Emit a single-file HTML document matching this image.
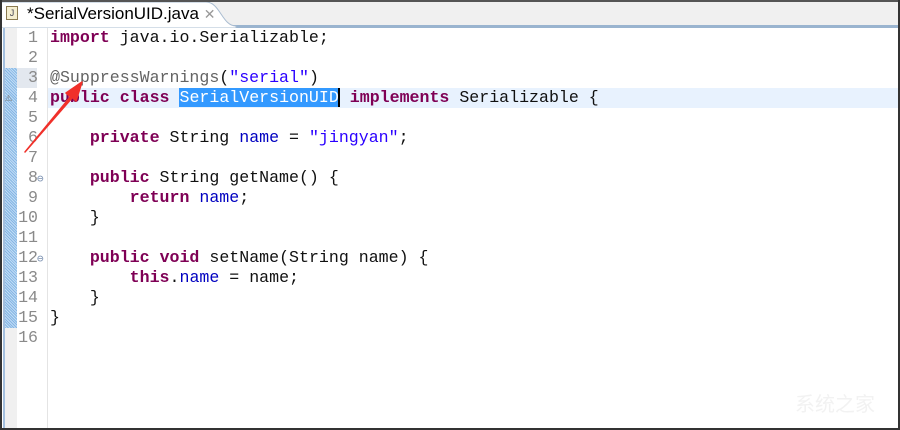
<!DOCTYPE html>
<html><head><style>
body{margin:0;width:900px;height:430px;overflow:hidden;background:#fff;font-family:"Liberation Mono",monospace;position:relative}
.abs{position:absolute}
.code{position:absolute;left:50px;top:28px;font-size:16.6px;line-height:20px;white-space:pre;color:#111}
.num{position:absolute;left:14px;width:24px;top:28px;font-size:16.6px;line-height:20px;text-align:right;color:#8a8a8a;white-space:pre}
.k{color:#7f0055;font-weight:bold}
.f{color:#0000c0}
.s{color:#2a00ff}
.a{color:#646464}
.sel{background:#3399ff;color:#fff}
</style></head><body>
<div class="abs" style="left:0;top:0;width:900px;height:26px;background:#f0f0f0;border-top:2px solid #555;box-sizing:border-box"></div>
<div class="abs" style="left:0;top:25px;width:900px;height:3px;background:#9ab4cf"></div>
<svg class="abs" style="left:0;top:2px" width="250" height="26"><path d="M0 26 V0 H206 C220 0 222 24 236 24 V26Z" fill="#fff" stroke="#a9bcd0"/></svg>
<div class="abs" style="left:6px;top:6px;width:12px;height:14px;border:1px solid #8a7a50;background:#f5eed0;box-sizing:border-box;font:9px 'Liberation Sans';color:#445;text-align:center;line-height:12px">J</div>
<div class="abs" style="left:27px;top:4px;font:17px 'Liberation Sans',sans-serif;color:#000">*SerialVersionUID.java <span style="color:#999;font-size:14px">✕</span></div>
<div class="abs" style="left:0;top:0;width:2px;height:430px;background:#333"></div>
<div class="abs" style="right:0;top:0;width:2px;height:430px;background:#333"></div>
<div class="abs" style="left:0;bottom:0;width:900px;height:2px;background:#333"></div>
<div class="abs" style="left:3px;top:28px;width:2px;height:400px;background:#a3bfde"></div>
<div class="abs" style="left:5px;top:28px;width:12px;height:400px;background:#f0f0f0"></div>
<div class="abs" style="left:5px;top:68px;width:12px;height:260px;background:repeating-linear-gradient(45deg,#86b6e4 0 1px,#c0dcf5 1px 2px)"></div>
<div class="abs" style="left:17px;top:68px;width:20px;height:20px;background:#e3e8ef"></div>
<div class="abs" style="left:47px;top:28px;width:1px;height:400px;background:#e4e4e4"></div>
<div class="abs" style="left:48px;top:88px;width:850px;height:20px;background:#e8f2fe"></div>
<div class="abs" style="left:5px;top:90px;font-size:12px;color:#777">⚠</div>
<div class="num">1
2
3
4
5
6
7
8
9
10
11
12
13
14
15
16</div>
<div class="abs" style="left:37px;top:172px;font-size:11px;color:#7a90b0">⊖</div>
<div class="abs" style="left:37px;top:252px;font-size:11px;color:#7a90b0">⊖</div>
<div class="code"><span class="k">import</span> java.io.Serializable;

<span class="a">@SuppressWarnings</span>(<span class="s">"serial"</span>)
<span class="k">public</span> <span class="k">class</span> <span class="sel">SerialVersionUID</span><span style="border-left:2px solid #000;margin-left:-1px"></span> <span class="k">implements</span> Serializable {

    <span class="k">private</span> String <span class="f">name</span> = <span class="s">"jingyan"</span>;

    <span class="k">public</span> String getName() {
        <span class="k">return</span> <span class="f">name</span>;
    }

    <span class="k">public</span> <span class="k">void</span> setName(String name) {
        <span class="k">this</span>.<span class="f">name</span> = name;
    }
}
</div>
<svg class="abs" style="left:0;top:0" width="120" height="170"><path d="M25 152 L72 98 L66 93 L82 82 L76 101 L71 96 Z" fill="#f0302a" stroke="#f0302a" stroke-width="1.5" stroke-linejoin="round"/></svg>
<div class="abs" style="left:795px;top:388px;font:20px 'Noto Sans CJK SC',sans-serif;color:#f2f2f2">系统之家</div>
</body></html>
